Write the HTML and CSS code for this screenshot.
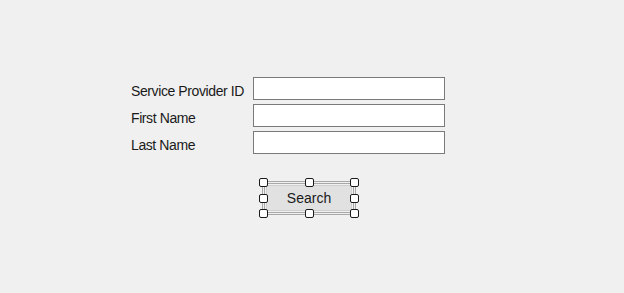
FILE: index.html
```html
<!DOCTYPE html>
<html>
<head>
<meta charset="utf-8">
<link rel="stylesheet" href="styles.css">
</head>
<body>
<div class="page">
  <div class="form">
    <label class="lbl">Service Provider ID</label>
    <div class="field"></div>
    <label class="lbl">First Name</label>
    <div class="field"></div>
    <label class="lbl">Last Name</label>
    <div class="field"></div>
  </div>
  <div class="actions">
    <div class="sel">
      <div class="sel-inner">
        <div class="btn">Search</div>
      </div>
      <span class="h tl"></span><span class="h tc"></span><span class="h tr"></span>
      <span class="h ml"></span><span class="h mr"></span>
      <span class="h bl"></span><span class="h bc"></span><span class="h br"></span>
    </div>
  </div>
</div>
</body>
</html>
```
FILE: styles.css
```css
html, body {
  margin: 0;
  padding: 0;
  background: #f0f0f0;
  width: 624px;
  height: 293px;
  overflow: hidden;
  font-family: "Liberation Sans", Arial, sans-serif;
  color: #1a1a1a;
}
.page {
  padding-top: 77px;
  padding-left: 131px;
}
.form {
  display: grid;
  grid-template-columns: 122px 192px;
  grid-auto-rows: 23px;
  row-gap: 4px;
}
.lbl {
  font-size: 14px;
  letter-spacing: -0.4px;
  line-height: 23px;
  padding-top: 3px;
  white-space: nowrap;
}
.field {
  height: 23px;
  box-sizing: border-box;
  background: #ffffff;
  border: 1px solid #7a7a7a;
}
.actions {
  padding-left: 131px;
  padding-top: 27px;
}
.sel {
  position: relative;
  width: 94px;
  height: 34px;
  box-sizing: border-box;
  border: 1px solid #a8a8a8;
  padding: 1px;
}
.sel-inner {
  height: 100%;
  box-sizing: border-box;
  border: 1px solid #a8a8a8;
  padding: 1px;
}
.btn {
  height: 100%;
  box-sizing: border-box;
  background: #e1e1e1;
  border: 1px solid #cfcfcf;
  display: flex;
  align-items: center;
  justify-content: center;
  font-size: 14px;
  color: #1a1a1a;
}
.h {
  position: absolute;
  width: 9px;
  height: 9px;
  box-sizing: border-box;
  background: #ffffff;
  border: 1px solid #1a1a1a;
  border-radius: 2px;
}
.tl { left: -4px; top: -4px; }
.tc { left: calc(50% - 4.5px); top: -4px; }
.tr { right: -4px; top: -4px; }
.ml { left: -4px; top: calc(50% - 4.5px); }
.mr { right: -4px; top: calc(50% - 4.5px); }
.bl { left: -4px; bottom: -4px; }
.bc { left: calc(50% - 4.5px); bottom: -4px; }
.br { right: -4px; bottom: -4px; }
```
